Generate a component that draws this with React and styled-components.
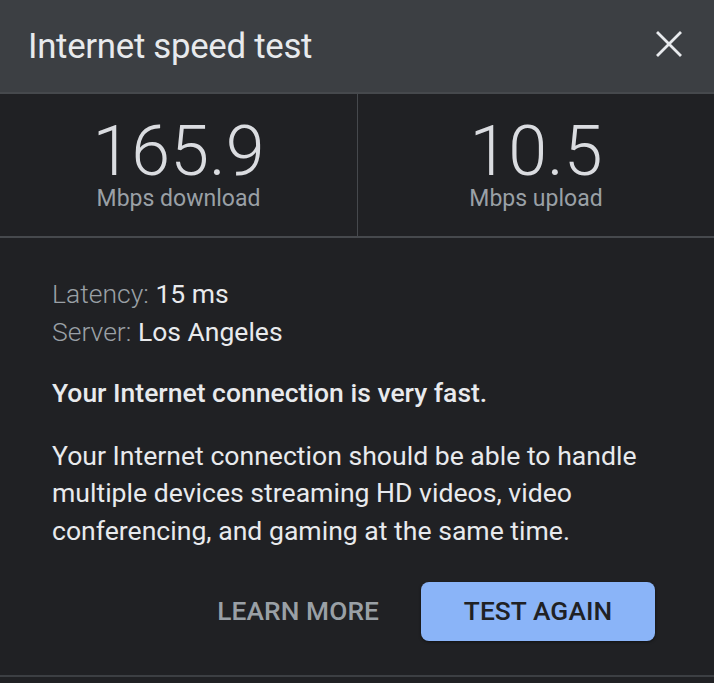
import styled, { createGlobalStyle } from "styled-components";

const Global = createGlobalStyle`
  html, body {
    margin: 0;
    padding: 0;
    background: #202124;
  }
  body {
    font-family: Roboto, "Noto Sans", sans-serif;
    color: #e8eaed;
  }
`;

const Dialog = styled.div`
  width: 714px;
  height: 683px;
  background: #202124;
  display: flex;
  flex-direction: column;
  overflow: hidden;
`;

const Header = styled.header`
  height: 94px;
  background: #3c3f43;
  border-bottom: 2px solid #46494d;
  display: flex;
  align-items: center;
  justify-content: space-between;
  padding: 0 32px 0 28px;
  box-sizing: border-box;

  h1 {
    margin: 0;
    font-size: 34.8px;
    font-weight: 400;
    color: #e8eaed;
    letter-spacing: -0.3px;
  }
`;

const CloseButton = styled.button`
  background: none;
  border: 0;
  padding: 0;
  display: flex;
  color: #e8eaed;
  cursor: pointer;
  margin-top: -4px;
`;

const Stats = styled.section`
  display: grid;
  grid-template-columns: 357px 1fr;
  height: 142px;
  border-bottom: 2px solid #46494d;
`;

const Stat = styled.div`
  display: flex;
  flex-direction: column;
  align-items: center;
  padding-top: 17px;
  border-left: ${({ $divider }) => ($divider ? "1px solid #46494d" : "none")};
`;

const Value = styled.div`
  font-size: 70px;
  font-weight: 300;
  line-height: 80px;
  color: #dadce0;
`;

const Unit = styled.div`
  font-size: 23px;
  font-weight: 400;
  line-height: 16px;
  color: #9aa0a6;
`;

const Body = styled.section`
  padding: 37px 52px 0 52px;
  display: flex;
  flex-direction: column;
`;

const InfoLine = styled.div`
  font-size: 26.5px;
  line-height: 37.5px;
  color: #e8eaed;

  span {
    color: #9aa0a6;
    font-weight: 300;
  }
`;

const Verdict = styled.p`
  margin: 24px 0 0;
  font-size: 26.5px;
  font-weight: 500;
  line-height: 37.5px;
  color: #e8eaed;
`;

const Description = styled.p`
  margin: 25px 0 0;
  font-size: 26.6px;
  line-height: 37.7px;
  color: #e8eaed;
`;

const Actions = styled.div`
  display: flex;
  justify-content: flex-end;
  align-items: center;
  gap: 42px;
  margin-top: 32px;
  margin-right: 7px;
`;

const TextButton = styled.button`
  background: none;
  border: 0;
  padding: 0;
  font-family: inherit;
  font-size: 26.3px;
  font-weight: 500;
  color: #9aa0a6;
  letter-spacing: 0.1px;
`;

const PrimaryButton = styled.button`
  width: 234px;
  height: 59px;
  border: 0;
  border-radius: 8px;
  background: #8ab4f8;
  color: #202124;
  font-family: inherit;
  font-size: 26.3px;
  font-weight: 500;
  letter-spacing: 0.1px;
  box-shadow: 0 1px 3px rgba(0, 0, 0, 0.5);
`;

const BottomRule = styled.div`
  margin-top: auto;
  height: 6px;
  border-top: 2px solid #3c3f43;
  background: #202124;
`;

export default function App() {
  return (
    <>
      <Global />
      <Dialog>
        <Header>
          <h1>Internet speed test</h1>
          <CloseButton aria-label="Close">
            <svg width="26" height="26" viewBox="0 0 26 26">
              <path
                d="M2 2L24 24M24 2L2 24"
                stroke="currentColor"
                strokeWidth="2.8"
                strokeLinecap="square"
              />
            </svg>
          </CloseButton>
        </Header>
        <Stats>
          <Stat>
            <Value>165.9</Value>
            <Unit>Mbps download</Unit>
          </Stat>
          <Stat $divider>
            <Value>10.5</Value>
            <Unit>Mbps upload</Unit>
          </Stat>
        </Stats>
        <Body>
          <InfoLine>
            <span>Latency:</span> 15 ms
          </InfoLine>
          <InfoLine>
            <span>Server:</span> Los Angeles
          </InfoLine>
          <Verdict>Your Internet connection is very fast.</Verdict>
          <Description>
            Your Internet connection should be able to handle multiple devices
            streaming HD videos, video conferencing, and gaming at the same
            time.
          </Description>
          <Actions>
            <TextButton>LEARN MORE</TextButton>
            <PrimaryButton>TEST AGAIN</PrimaryButton>
          </Actions>
        </Body>
        <BottomRule />
      </Dialog>
    </>
  );
}
